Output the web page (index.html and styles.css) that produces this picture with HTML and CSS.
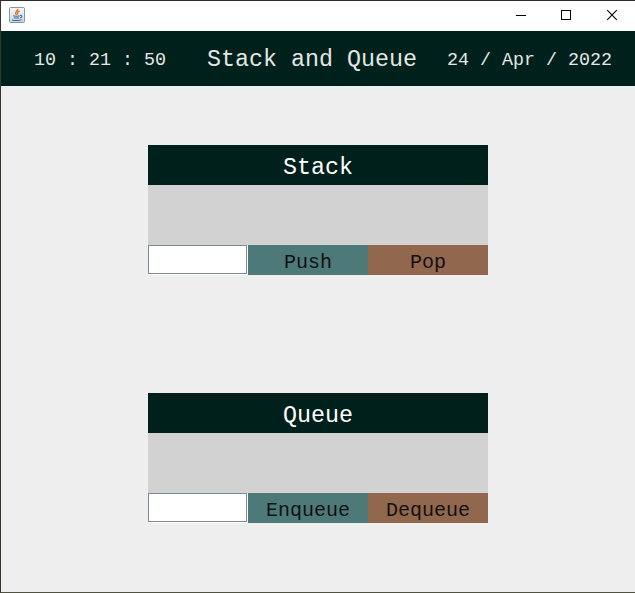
FILE: index.html
```html
<!DOCTYPE html>
<html lang="en">
<head>
<meta charset="utf-8">
<title>Stack and Queue</title>
<link rel="stylesheet" href="styles.css">
</head>
<body>
<div class="window">
  <div class="titlebar">
    <svg class="app-icon" width="16" height="16" viewBox="0 0 16 16">
      <defs><linearGradient id="tile" x1="0" y1="0" x2="0" y2="1"><stop offset="0" stop-color="#f4f6f8"/><stop offset="0.55" stop-color="#dfe6ed"/><stop offset="1" stop-color="#c3d1df"/></linearGradient></defs>
      <rect x="0.5" y="0.5" width="15" height="15" rx="1" fill="url(#tile)" stroke="#8497aa"/>
      <path d="M8.7 1.8C9.2 4 5.7 4.6 6.7 6.6L7.8 8.2M10.7 3.9C8.6 4.8 8 5.7 8.9 7.5" fill="none" stroke="#e5751c" stroke-width="1.4"/>
      <path d="M4 8.8C6 9.4 8.5 9.3 10.5 8.7M4.8 10.7C6.6 11.2 8.5 11.1 10 10.7M11 8.5c2.4-.7 2.5 1.7.2 2.4M3 12.9C5 13.7 10 13.7 12.5 12.8" fill="none" stroke="#41709c" stroke-width="1.1"/>
    </svg>
    <div class="controls">
      <svg width="46" height="30" viewBox="0 0 46 30" shape-rendering="crispEdges"><path d="M18 14.5h10" stroke="#000"/></svg>
      <svg width="45" height="30" viewBox="0 0 45 30" shape-rendering="crispEdges"><path d="M17.5 9.5h9v9h-9z" fill="none" stroke="#000"/></svg>
      <svg width="46" height="30" viewBox="0 0 46 30"><path d="M18.2 9.2l9.6 9.6M27.8 9.2l-9.6 9.6" stroke="#000" stroke-width="1.1"/></svg>
    </div>
  </div>
  <header class="header">
    <span class="clock">10 : 21 : 50</span>
    <h1 class="title">Stack and Queue</h1>
    <span class="date">24 / Apr / 2022</span>
  </header>
  <main class="content">
    <section class="panel">
      <h2 class="panel-title">Stack</h2>
      <div class="display"></div>
      <div class="actions">
        <input class="field" type="text" aria-label="Stack value">
        <button class="btn add">Push</button>
        <button class="btn remove">Pop</button>
      </div>
    </section>
    <section class="panel">
      <h2 class="panel-title">Queue</h2>
      <div class="display"></div>
      <div class="actions">
        <input class="field" type="text" aria-label="Queue value">
        <button class="btn add">Enqueue</button>
        <button class="btn remove">Dequeue</button>
      </div>
    </section>
  </main>
</div>
</body>
</html>
```

FILE: styles.css
```css
* { box-sizing: border-box; }

body {
  margin: 0;
  font-family: "Liberation Mono", "Courier New", monospace;
}

.window {
  display: flex;
  flex-direction: column;
  width: 635px;
  height: 593px;
  background: #eee;
  border: solid #2b2b2d;
  border-width: 1px 0 1px 1px;
  border-left-color: #36362f;
  border-bottom-color: #51513f;
  overflow: hidden;
}

.titlebar {
  display: flex;
  justify-content: space-between;
  height: 30px;
  flex: none;
  background: #fff;
}

.app-icon { margin: 6px 0 0 8px; }

.controls { display: flex; }
.controls svg { display: block; }

.header {
  display: flex;
  align-items: center;
  height: 55px;
  flex: none;
  padding: 2px 23px 0 33px;
  justify-content: space-between;
  background: #00201b;
  color: #e4e7e6;
  white-space: pre;
}

.clock, .date { padding-top: 2px; font-size: 18.33px; line-height: 22px; }
.title { margin: 0 0 0 11px; font-size: 23.33px; line-height: 28px; font-weight: 400; }

.content {
  display: flex;
  flex-direction: column;
  gap: 118px;
  padding: 59px 0 0 147px;
}

.panel { width: 340px; }

.panel-title {
  margin: 0;
  height: 40px;
  padding-top: 5px;
  background: #00201b;
  color: #fff;
  font-size: 23.33px;
  line-height: 37px;
  font-weight: 400;
  text-align: center;
}

.display { height: 60px; background: #d2d2d2; }

.actions { display: grid; grid-template-columns: 100px 120px 120px; height: 30px; }

.field {
  width: 99px;
  height: 29px;
  padding: 0 4px;
  border: 1px solid #7a8a99;
  border-radius: 0;
  background: #fff;
  box-shadow: 1px 1px #fff;
  outline: 0;
  font: inherit;
}

.btn {
  border: 0;
  padding: 5px 0 0;
  color: #111;
  font-family: inherit;
  font-size: 20px;
  line-height: 25px;
}

.add { background: #4d7a79; }
.remove { background: #91674e; }
```
